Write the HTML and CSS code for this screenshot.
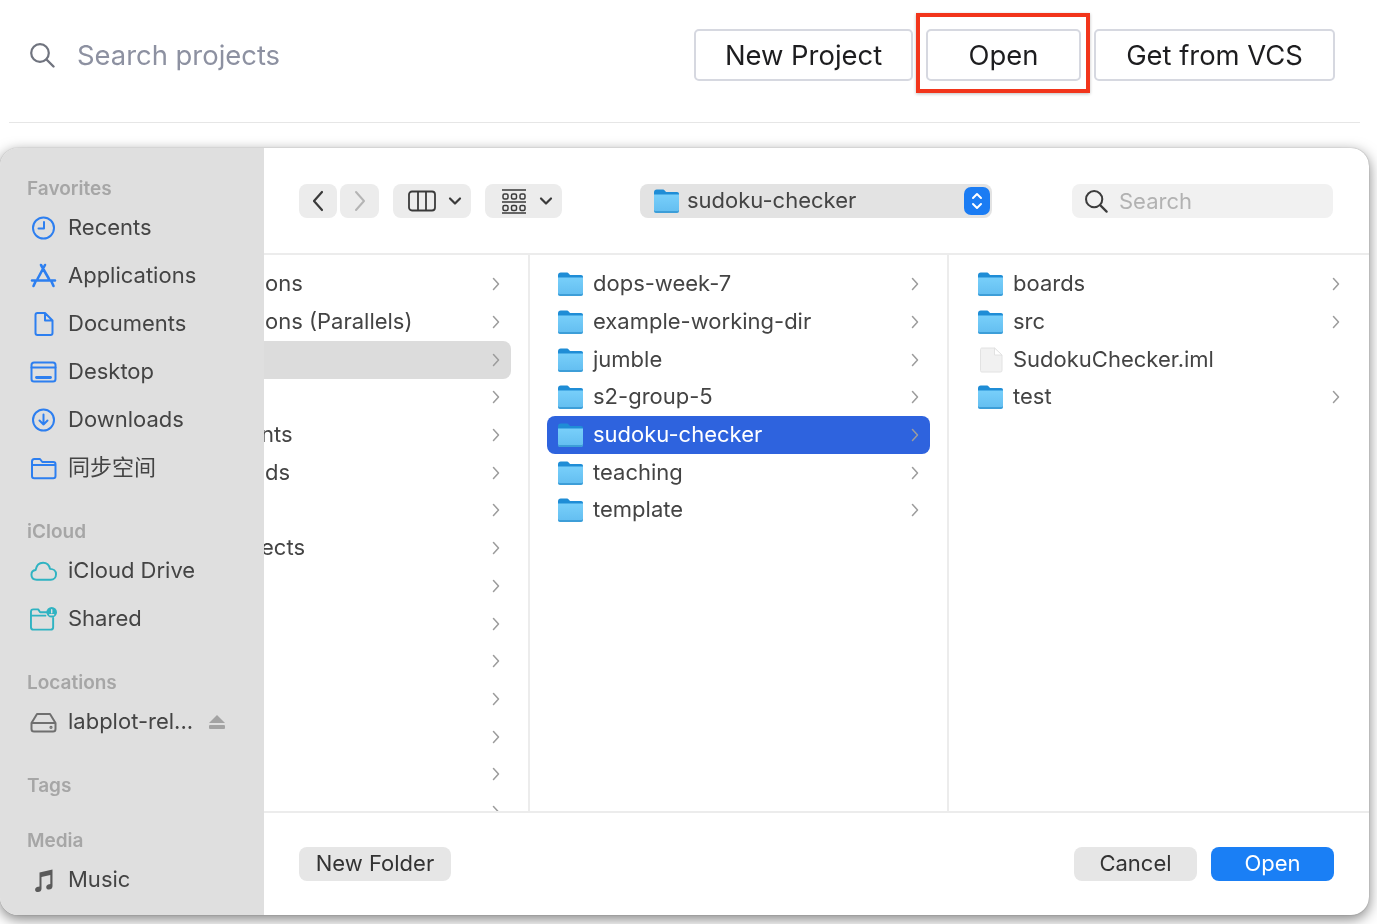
FILE: index.html
```html
<!DOCTYPE html>
<html>
<head>
  <title>Welcome - Open Project</title>
  <link rel="stylesheet" href="styles.css">
</head>
<body>
  <svg class="defs" width="0" height="0">
    <defs>
      <linearGradient id="folderFill" x1="0" y1="0" x2="0" y2="1">
        <stop offset="0" stop-color="#78cffa"/>
        <stop offset="1" stop-color="#62bdf0"/>
      </linearGradient>
      <symbol id="folder" viewBox="0 0 27 26">
        <path d="M1 4.500C1 2.600 2 1.500 3.800 1.500h5.600c1.200 0 1.800.4 2.600 1.300l1 1.200H24c1.300 0 2 .8 2 2v2H1z" fill="#1f8dd6"/>
        <path d="M1 6.500h25V22.500c0 1.700-1 2.500-2.500 2.500h-20C2 25 1 24.200 1 22.500z" fill="url(#folderFill)"/>
        <path d="M1 22.500c0 1.700 1 2.500 2.500 2.500h20c1.500 0 2.500-.8 2.500-2.500v-1c0 1-.8 1.500-2 1.500H3c-1.200 0-2-.5-2-1.500z" fill="#3d9ed8"/>
      </symbol>
      <symbol id="chev" viewBox="0 0 10 14">
        <path d="M2.500 1.500 7.500 7l-5 5.500" fill="none" stroke="#9c9c9c" stroke-width="1.500" stroke-linecap="round" stroke-linejoin="round"/>
      </symbol>
      <symbol id="down" viewBox="0 0 14 10">
        <path d="M2 2.500 7 7.500l5-5" fill="none" stroke="#3a3a3a" stroke-width="2.200" stroke-linecap="round" stroke-linejoin="round"/>
      </symbol>
      <symbol id="lens" viewBox="0 0 26 26">
        <circle cx="11" cy="11" r="8.800" fill="none" stroke="currentColor" stroke-width="2.200"/>
        <path d="m17.500 17.500 7 7" fill="none" stroke="currentColor" stroke-width="2.400" stroke-linecap="round"/>
      </symbol>
    </defs>
  </svg>

  <div class="page">
    <header class="topbar">
      <div class="project-search">
        <svg class="project-search-icon" width="26" height="26"><use href="#lens"/></svg>
        <span>Search projects</span>
      </div>
      <div class="top-actions">
        <button class="top-btn btn-new">New Project</button>
        <button class="top-btn btn-open">Open</button>
        <button class="top-btn btn-vcs">Get from VCS</button>
      </div>
    </header>

    <div class="dialog">
      <aside class="sidebar">
        <section class="side-group">
          <h4>Favorites</h4>
          <div class="side-item">
            <svg viewBox="0 0 26 26" class="side-icon blue"><circle cx="13" cy="13" r="10.500"/><path d="M13.500 7v6.500H8"/></svg>
            <span>Recents</span>
          </div>
          <div class="side-item">
            <svg viewBox="0 0 26 26" class="side-icon blue"><path d="M14.500 2 7 16M10.500 2 18.500 16M1.500 17.500h23M5.500 17.500 3 23M20.500 17.500 23 23" stroke-width="2.600"/></svg>
            <span>Applications</span>
          </div>
          <div class="side-item">
            <svg viewBox="0 0 26 26" class="side-icon blue"><path d="M5 4c0-1.200.7-2 2-2h7.500L22 9.500V22c0 1.300-.7 2-2 2H7c-1.300 0-2-.7-2-2zM14.500 2v7.500H22"/></svg>
            <span>Documents</span>
          </div>
          <div class="side-item">
            <svg viewBox="0 0 26 26" class="side-icon blue"><rect x="1" y="3.500" width="24" height="19" rx="2.500"/><path d="M1 8.500h24"/><path d="M6 18.500h14" stroke-width="2.800"/></svg>
            <span>Desktop</span>
          </div>
          <div class="side-item">
            <svg viewBox="0 0 26 26" class="side-icon blue"><circle cx="13" cy="13" r="10.500"/><path d="M13 7.500v10M9 13.500l4 4 4-4"/></svg>
            <span>Downloads</span>
          </div>
          <div class="side-item">
            <svg viewBox="0 0 26 26" class="side-icon blue"><path d="M1.500 6.500C1.500 5 2.300 4 3.800 4h5.700l2.300 3h10.900c1.500 0 2.300.9 2.300 2.300V21c0 1.500-.8 2.300-2.300 2.300H3.800c-1.500 0-2.300-.8-2.300-2.300zM1.500 10h23"/></svg>
            <span>同步空间</span>
          </div>
        </section>

        <section class="side-group">
          <h4>iCloud</h4>
          <div class="side-item">
            <svg viewBox="0 0 28 26" class="side-icon teal"><path d="M7 22c-3.500 0-5.500-2.200-5.500-5.200 0-2.600 1.800-4.500 4.300-4.800C6.700 7.300 9.500 4.500 13.500 4.500c3.800 0 6.500 2.700 7.200 6.300 3.500 0 6.300 2.200 6.300 5.500 0 3-2.200 5.700-5.500 5.700z"/></svg>
            <span>iCloud Drive</span>
          </div>
          <div class="side-item">
            <svg viewBox="0 0 28 26" class="side-icon teal"><path d="M18 6H10.500L8.500 3H3.500C2 3 1 4 1 5.500v16c0 1.500 1 2.500 2.500 2.500h18c1.500 0 2.500-1 2.500-2.500V12M1 9.500h15"/><circle class="badge" cx="22.500" cy="6" r="5.500"/><path class="badge-mark" d="M22.500 3.500v3M20.500 8.500h4"/></svg>
            <span>Shared</span>
          </div>
        </section>

        <section class="side-group">
          <h4>Locations</h4>
          <div class="side-item">
            <svg viewBox="0 0 26 26" class="side-icon gray"><path d="M6.500 5h13L25 14v6c0 1.500-.9 2.500-2.500 2.500h-19C1.900 22.500 1 21.500 1 20v-6zM1 14h24"/><circle cx="20.500" cy="18.300" r=".6"/></svg>
            <span class="side-name">labplot-rel...</span>
            <svg viewBox="0 0 18 16" class="eject"><path d="M9 1 17 9H1z"/><rect x="1" y="11" width="16" height="4" rx="1"/></svg>
          </div>
        </section>

        <section class="side-group">
          <h4>Tags</h4>
        </section>

        <section class="side-group">
          <h4>Media</h4>
          <div class="side-item">
            <svg viewBox="0 0 26 26" class="side-icon note"><path d="M9 5.500 22 2.500v16.700c0 2-1.500 3.300-3.500 3.300-1.600 0-2.800-.9-2.800-2.300 0-1.600 1.300-2.600 3.100-2.900l1-.2V8L11 10v11.700c0 2-1.500 3.300-3.500 3.300-1.700 0-2.900-.9-2.900-2.300 0-1.600 1.300-2.600 3.100-2.900l1.300-.3z"/></svg>
            <span>Music</span>
          </div>
        </section>
      </aside>

      <div class="browser">
        <div class="toolbar">
          <div class="nav-pair">
            <div class="tool-btn nav-btn">
              <svg width="14" height="24" viewBox="0 0 14 24"><path d="M11 3 3 12l8 9" fill="none" stroke="#3a3a3a" stroke-width="2.200" stroke-linecap="round" stroke-linejoin="round"/></svg>
            </div>
            <div class="tool-btn nav-btn">
              <svg width="14" height="24" viewBox="0 0 14 24"><path d="m3 3 8 9-8 9" fill="none" stroke="#b4b4b4" stroke-width="2" stroke-linecap="round" stroke-linejoin="round"/></svg>
            </div>
          </div>
          <div class="tool-btn view-btn">
            <svg width="28" height="22" viewBox="0 0 28 22"><rect x="1" y="1.500" width="26" height="19" rx="3" fill="none" stroke="#3a3a3a" stroke-width="1.800"/><path d="M10 1.500v19M18 1.500v19" stroke="#3a3a3a" stroke-width="1.800"/></svg>
            <svg width="14" height="10"><use href="#down"/></svg>
          </div>
          <div class="tool-btn group-btn">
            <svg width="26" height="26" viewBox="0 0 26 26" fill="none" stroke="#3a3a3a" stroke-width="1.500"><path d="M1 2h24M1 14h24M1 25h24" stroke-width="1.300"/><rect x="2" y="6" width="5" height="5" rx="1.500"/><rect x="10.500" y="6" width="5" height="5" rx="1.500"/><rect x="19" y="6" width="5" height="5" rx="1.500"/><rect x="2" y="17.500" width="5" height="5" rx="1.500"/><rect x="10.500" y="17.500" width="5" height="5" rx="1.500"/><rect x="19" y="17.500" width="5" height="5" rx="1.500"/></svg>
            <svg width="14" height="10"><use href="#down"/></svg>
          </div>
          <div class="path-select">
            <svg class="folder-icon" width="27" height="26"><use href="#folder"/></svg>
            <span class="path-name">sudoku-checker</span>
            <div class="stepper">
              <svg width="14" height="22" viewBox="0 0 14 22" fill="none" stroke="#fff" stroke-width="2" stroke-linecap="round" stroke-linejoin="round"><path d="m3 8 4-4 4 4M3 14l4 4 4-4"/></svg>
            </div>
          </div>
          <div class="file-search">
            <svg width="24" height="24"><use href="#lens"/></svg>
            <span>Search</span>
          </div>
        </div>

        <div class="columns">
          <div class="column col-a">
            <div class="row"><span class="row-name">ons</span><svg class="chev"><use href="#chev"/></svg></div>
            <div class="row"><span class="row-name">ons (Parallels)</span><svg class="chev"><use href="#chev"/></svg></div>
            <div class="row row-parent"><span class="row-name"></span><svg class="chev"><use href="#chev"/></svg></div>
            <div class="row"><span class="row-name"></span><svg class="chev"><use href="#chev"/></svg></div>
            <div class="row"><span class="row-name cut">nts</span><svg class="chev"><use href="#chev"/></svg></div>
            <div class="row"><span class="row-name">ds</span><svg class="chev"><use href="#chev"/></svg></div>
            <div class="row"><span class="row-name"></span><svg class="chev"><use href="#chev"/></svg></div>
            <div class="row"><span class="row-name cut">ects</span><svg class="chev"><use href="#chev"/></svg></div>
            <div class="row"><span class="row-name"></span><svg class="chev"><use href="#chev"/></svg></div>
            <div class="row"><span class="row-name"></span><svg class="chev"><use href="#chev"/></svg></div>
            <div class="row"><span class="row-name"></span><svg class="chev"><use href="#chev"/></svg></div>
            <div class="row"><span class="row-name"></span><svg class="chev"><use href="#chev"/></svg></div>
            <div class="row"><span class="row-name"></span><svg class="chev"><use href="#chev"/></svg></div>
            <div class="row"><span class="row-name"></span><svg class="chev"><use href="#chev"/></svg></div>
            <div class="row"><span class="row-name"></span><svg class="chev"><use href="#chev"/></svg></div>
          </div>

          <div class="column col-b">
            <div class="row"><svg class="folder-icon" width="27" height="26"><use href="#folder"/></svg><span class="row-name">dops-week-7</span><svg class="chev"><use href="#chev"/></svg></div>
            <div class="row"><svg class="folder-icon" width="27" height="26"><use href="#folder"/></svg><span class="row-name">example-working-dir</span><svg class="chev"><use href="#chev"/></svg></div>
            <div class="row"><svg class="folder-icon" width="27" height="26"><use href="#folder"/></svg><span class="row-name">jumble</span><svg class="chev"><use href="#chev"/></svg></div>
            <div class="row"><svg class="folder-icon" width="27" height="26"><use href="#folder"/></svg><span class="row-name">s2-group-5</span><svg class="chev"><use href="#chev"/></svg></div>
            <div class="row row-selected"><svg class="folder-icon" width="27" height="26"><use href="#folder"/></svg><span class="row-name">sudoku-checker</span><svg class="chev"><use href="#chev"/></svg></div>
            <div class="row"><svg class="folder-icon" width="27" height="26"><use href="#folder"/></svg><span class="row-name">teaching</span><svg class="chev"><use href="#chev"/></svg></div>
            <div class="row"><svg class="folder-icon" width="27" height="26"><use href="#folder"/></svg><span class="row-name">template</span><svg class="chev"><use href="#chev"/></svg></div>
          </div>

          <div class="column col-c">
            <div class="row"><svg class="folder-icon" width="27" height="26"><use href="#folder"/></svg><span class="row-name">boards</span><svg class="chev"><use href="#chev"/></svg></div>
            <div class="row"><svg class="folder-icon" width="27" height="26"><use href="#folder"/></svg><span class="row-name">src</span><svg class="chev"><use href="#chev"/></svg></div>
            <div class="row">
              <svg class="folder-icon" width="27" height="26" viewBox="0 0 27 26"><path d="M3.500 2.500c0-.8.500-1.500 1.500-1.500h12.500L25 8v15.500c0 1-.5 1.500-1.500 1.500H5c-1 0-1.500-.5-1.500-1.500z" fill="#f1f1f1" stroke="#e2e2e2"/><path d="M17.500 1v7H25z" fill="#fff" stroke="#e2e2e2"/></svg>
              <span class="row-name">SudokuChecker.iml</span>
            </div>
            <div class="row"><svg class="folder-icon" width="27" height="26"><use href="#folder"/></svg><span class="row-name">test</span><svg class="chev"><use href="#chev"/></svg></div>
          </div>
        </div>

        <div class="footer">
          <button class="foot-btn btn-folder">New Folder</button>
          <div class="foot-right">
            <button class="foot-btn btn-cancel">Cancel</button>
            <button class="foot-btn btn-primary">Open</button>
          </div>
        </div>
      </div>
    </div>
  </div>
</body>
</html>
```

FILE: styles.css
```css
body {
  margin: 0;
  background: #fff;
  font-family: Inter, "Noto Sans CJK SC", sans-serif;
  color: #444;
}

.defs {
  display: block;
  height: 0;
}

.page {
  width: 1377px;
  height: 924px;
  overflow: hidden;
  background: #fff;
  filter: blur(0.4px);
}

/* top bar of the welcome window */
.topbar {
  height: 123px;
  margin: 0 17px 0 9px;
  padding-bottom: 12px;
  box-sizing: border-box;
  display: flex;
  align-items: center;
  justify-content: space-between;
  border-bottom: 1px solid #e6e6e6;
}

.project-search {
  display: flex;
  align-items: center;
  gap: 22px;
  margin-left: 20px;
  font-size: 27.4px;
  color: #8d91a1;
}

.project-search-icon {
  color: #70747f;
}

.top-actions {
  display: flex;
  gap: 13px;
  margin-right: 25px;
}

.top-btn {
  height: 52px;
  padding: 0;
  box-sizing: border-box;
  background: #fff;
  border: 2px solid #d6d8e0;
  border-radius: 5px;
  font-family: inherit;
  font-size: 27.4px;
  color: #1d1d1f;
}

.btn-new {
  width: 219px;
}

.btn-open {
  width: 155px;
  position: relative;
}

.btn-open::after {
  content: "";
  position: absolute;
  top: -18px;
  left: -12px;
  right: -11px;
  bottom: -14px;
  border: 4px solid #f2351b;
  box-shadow: 0 1px 3px rgba(0, 0, 0, 0.25);
}

.btn-vcs {
  width: 241px;
}

/* file dialog */
.dialog {
  width: 1369px;
  height: 767px;
  margin-top: 25px;
  display: flex;
  border-radius: 18px;
  overflow: hidden;
  background: #fff;
  box-shadow: 0 4px 14px rgba(0, 0, 0, 0.5), 0 0 1px rgba(0, 0, 0, 0.4);
}

.sidebar {
  width: 264px;
  flex-shrink: 0;
  box-sizing: border-box;
  padding-top: 26px;
  background: #dfdfdf;
}

.side-group {
  margin-bottom: 25px;
}

.side-group h4 {
  height: 30px;
  margin: 0;
  padding-left: 27px;
  font-size: 19px;
  font-weight: 600;
  line-height: 30px;
  color: #a6a6a6;
}

.side-item {
  height: 48px;
  display: flex;
  align-items: center;
  gap: 11px;
  padding-left: 30px;
  font-size: 22px;
  line-height: 1;
}

.side-item span {
  padding-bottom: 2px;
}

.side-icon {
  width: 27px;
  height: 26px;
  flex-shrink: 0;
  fill: none;
  stroke-width: 2;
  stroke-linecap: round;
  stroke-linejoin: round;
}

.side-icon.blue {
  stroke: #2d7ff0;
}

.side-icon.teal {
  stroke: #2fb3c2;
}

.side-icon.gray {
  stroke: #6f6f6f;
}

.side-icon.note {
  fill: #5a5a5a;
}

.badge {
  fill: #2fb3c2;
  stroke: none;
}

.badge-mark {
  stroke: #dfdfdf;
  stroke-width: 1.500;
}

.side-name {
  width: 128px;
  white-space: nowrap;
}

.eject {
  width: 18px;
  height: 16px;
  margin-left: 1px;
  fill: #a3a3a3;
}

.browser {
  flex: 1;
  min-width: 0;
  display: flex;
  flex-direction: column;
}

.toolbar {
  height: 107px;
  flex-shrink: 0;
  box-sizing: border-box;
  padding-left: 35px;
  display: flex;
  align-items: center;
  gap: 14px;
  border-bottom: 2px solid #ececec;
}

.tool-btn {
  height: 34px;
  display: flex;
  align-items: center;
  justify-content: center;
  background: #ececec;
  border-radius: 8px;
}

.nav-pair {
  display: flex;
  gap: 3px;
}

.nav-btn {
  width: 38px;
}

.nav-btn + .nav-btn {
  width: 39px;
}

.view-btn {
  width: 78px;
  box-sizing: border-box;
  padding-left: 15px;
  justify-content: flex-start;
  gap: 12px;
}

.group-btn {
  width: 77px;
  box-sizing: border-box;
  padding-left: 16px;
  justify-content: flex-start;
  gap: 12px;
}

.path-select {
  width: 352px;
  height: 34px;
  margin-left: 64px;
  box-sizing: border-box;
  padding: 0 2px 0 13px;
  display: flex;
  align-items: center;
  gap: 7px;
  background: #e3e3e3;
  border-radius: 8px;
  font-size: 22px;
}

.path-name {
  flex: 1;
  padding-bottom: 2px;
}

.stepper {
  width: 26px;
  height: 28px;
  display: flex;
  align-items: center;
  justify-content: center;
  background: #1b7cf3;
  border-radius: 7px;
}

.file-search {
  width: 261px;
  height: 34px;
  margin-left: 66px;
  box-sizing: border-box;
  padding-left: 12px;
  display: flex;
  align-items: center;
  gap: 11px;
  background: #f1f1f1;
  border-radius: 8px;
  font-size: 22px;
  color: #b2b2b2;
}

.file-search svg {
  color: #3c3c3c;
}

/* finder columns */
.columns {
  flex: 1;
  min-height: 0;
  display: flex;
}

.column {
  box-sizing: border-box;
  padding: 10.5px 17px 0;
  overflow: hidden;
  font-size: 22px;
}

.col-a {
  width: 266px;
  padding-left: 0;
  border-right: 2px solid #ececec;
}

.col-b {
  width: 419px;
  border-right: 2px solid #ececec;
}

.col-c {
  flex: 1;
  padding: 10.5px 18px 0;
}

.row {
  height: 37.7px;
  display: flex;
  align-items: center;
  gap: 9px;
  padding: 0 10px;
  border-radius: 8px;
  white-space: nowrap;
}

.col-a .row {
  padding-left: 1px;
  border-radius: 0 8px 8px 0;
}

.row-name {
  flex: 1;
  padding-bottom: 2px;
}

.row-name.cut {
  margin-left: -4px;
}

.folder-icon {
  flex-shrink: 0;
}

.chev {
  width: 10px;
  height: 14px;
  flex-shrink: 0;
}

.row-parent {
  background: #dcdcdc;
}

.row-selected {
  background: #2e63de;
  color: #fff;
}

/* bottom buttons */
.footer {
  height: 104px;
  flex-shrink: 0;
  box-sizing: border-box;
  padding: 0 35px;
  display: flex;
  align-items: center;
  justify-content: space-between;
  border-top: 2px solid #ececec;
}

.foot-right {
  display: flex;
  gap: 14px;
}

.foot-btn {
  height: 34px;
  padding: 0 0 2px;
  border: none;
  border-radius: 8px;
  background: #e6e6e6;
  font-family: inherit;
  font-size: 22px;
  color: #333;
}

.btn-folder {
  width: 152px;
}

.btn-cancel {
  width: 123px;
}

.btn-primary {
  width: 123px;
  background: #1a7ff5;
  color: #fff;
}
```
